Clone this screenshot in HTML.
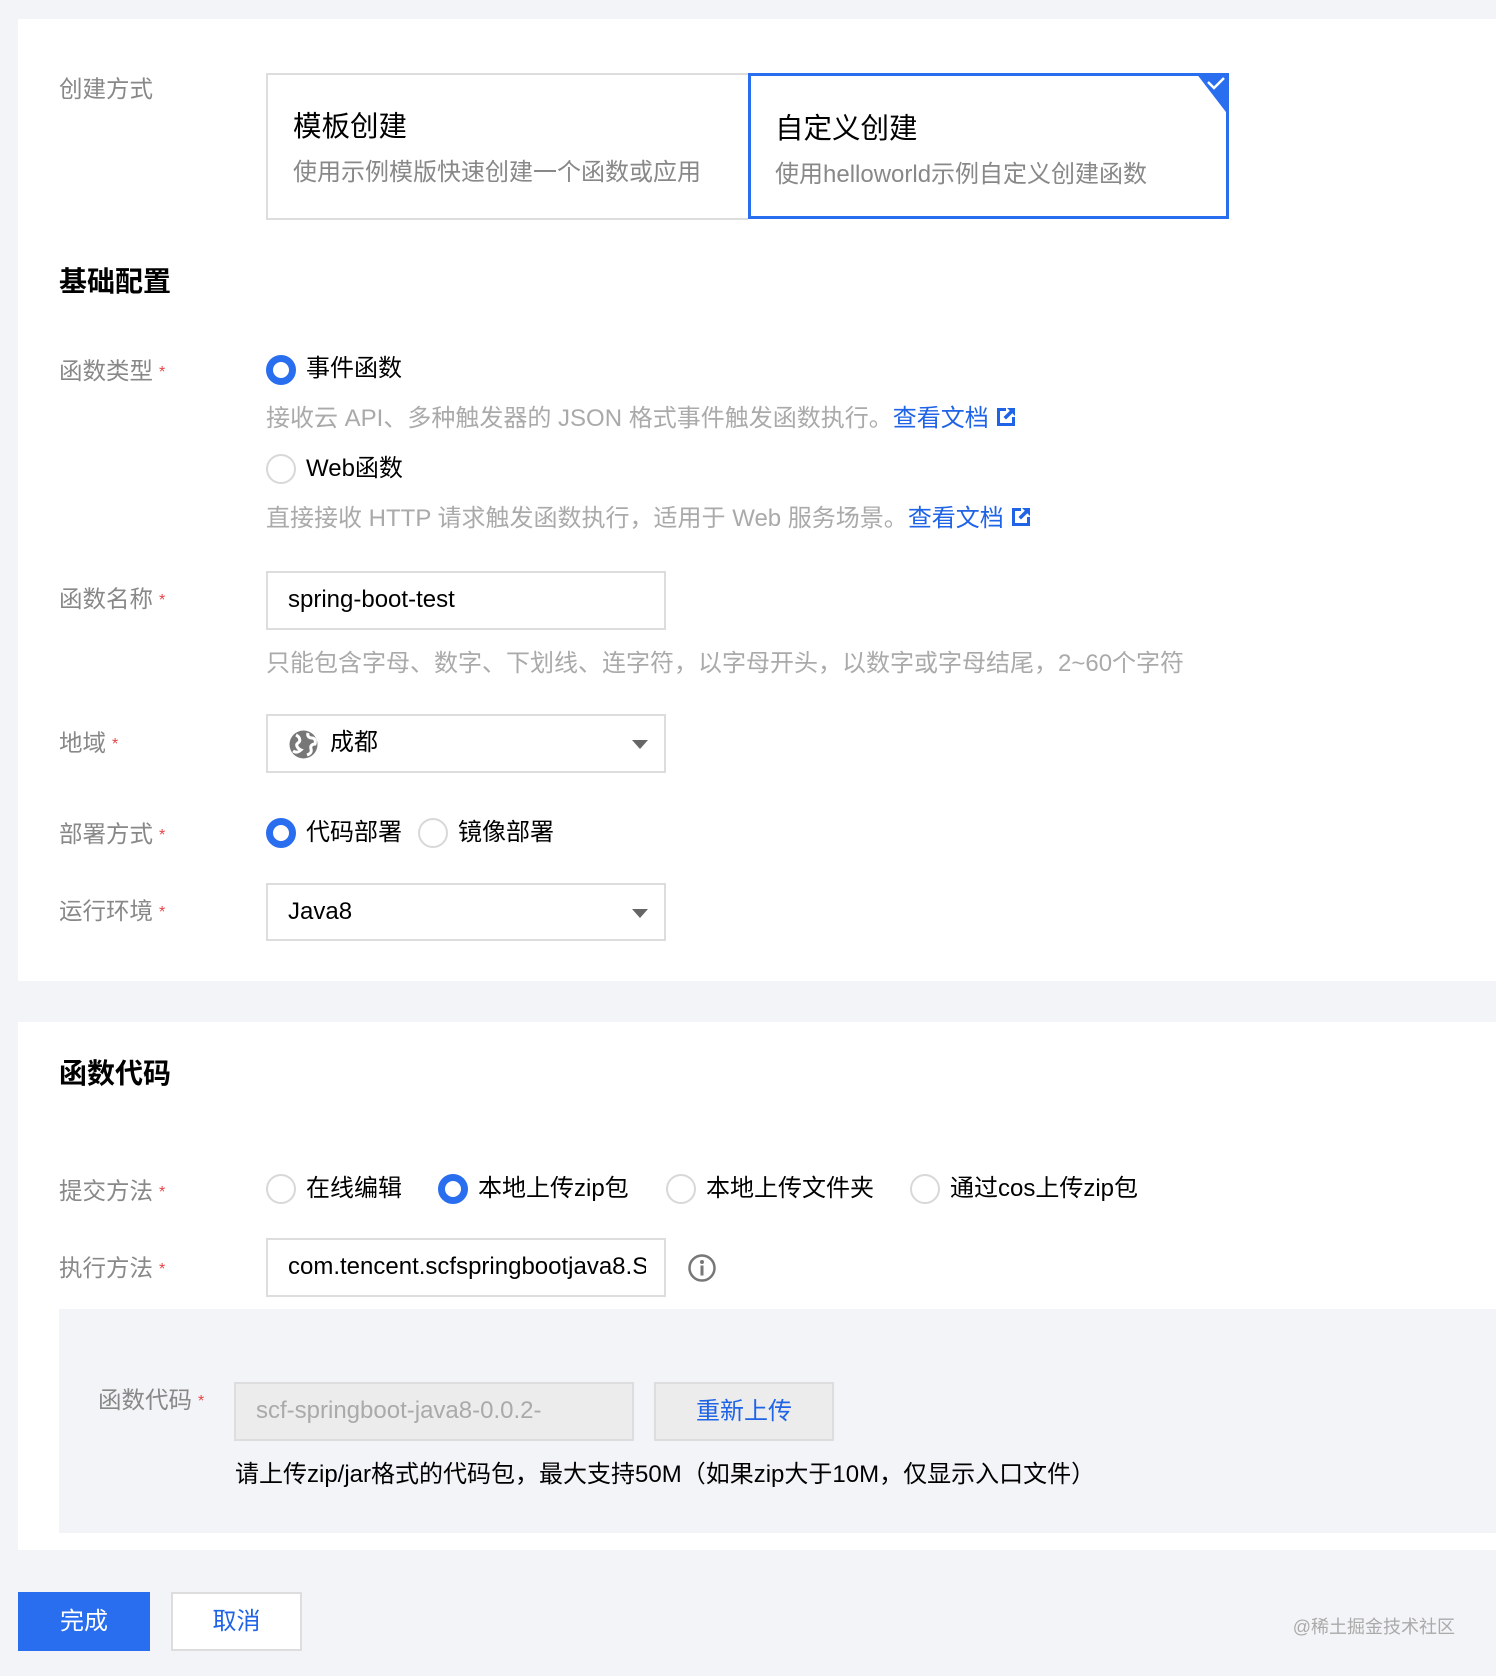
<!DOCTYPE html>
<html><head><meta charset="utf-8"><style>
*{margin:0;padding:0;box-sizing:border-box}
body{width:1496px;height:1676px;background:#f3f4f7;position:relative;overflow:hidden;font-family:"Liberation Sans","Noto Sans CJK SC",sans-serif;color:#000}
.a{position:absolute;white-space:nowrap}
.panel{position:absolute;background:#fff;left:18px;right:0}
.lbl{position:absolute;left:59px;font-size:23.5px;color:#888;line-height:30px}
.lbl i{color:#e54545;font-style:normal;font-size:16px;margin-left:6px;vertical-align:2px}
.t{font-size:24px;line-height:30px}
.desc{font-size:24px;color:#aaa;line-height:30px}
.blue{color:#1f63e6}
.radio{position:absolute;width:30px;height:30px;border-radius:50%;border:2px solid #d8d8d8;background:#fff}
.radio.on{border:7px solid #2a6ef0}
.inp{position:absolute;border:2px solid #ddd;background:#fff;font-size:24px;line-height:54px;padding-left:20px;overflow:hidden}
.h{font-size:28px;font-weight:bold;line-height:36px}
.arrow{position:absolute;right:16px;top:24px;width:0;height:0;border-left:8px solid transparent;border-right:8px solid transparent;border-top:9px solid #666}
</style></head><body>
<div class="panel" style="top:19px;height:962px"></div>
<div class="panel" style="top:1022px;height:528px"></div>

<div class="lbl" style="top:74px">创建方式</div>
<div class="a" style="left:266px;top:73px;width:482px;height:147px;border:2px solid #ddd;border-right:none"></div>
<div class="a" style="left:748px;top:73px;width:481px;height:146px;border:3px solid #2a6ef0"></div>
<svg class="a" style="left:1196px;top:73px" width="33" height="43"><polygon points="0,0 33,0 33,43" fill="#2a6ef0"/><path d="M12 9 L18 15 L28 5" stroke="#fff" stroke-width="2.5" fill="none"/></svg>
<div class="a" style="left:293px;top:109px;font-size:28.5px;line-height:36px">模板创建</div>
<div class="a desc" style="left:293px;top:158px;color:#888">使用示例模版快速创建一个函数或应用</div>
<div class="a" style="left:775px;top:111px;font-size:28.5px;line-height:36px">自定义创建</div>
<div class="a desc" style="left:775px;top:160px;color:#888">使用helloworld示例自定义创建函数</div>

<div class="a h" style="left:59px;top:264px">基础配置</div>

<div class="lbl" style="top:356px">函数类型<i>*</i></div>
<div class="radio on" style="left:266px;top:355px"></div>
<div class="a t" style="left:306px;top:354px">事件函数</div>
<div class="a desc" style="left:266px;top:404px">接收云 API、多种触发器的 JSON 格式事件触发函数执行。<span class="blue">查看文档</span> <svg width="22" height="22" style="vertical-align:-2px"><path d="M2 2h9v3H5v12h12v-6h3v9H2z" fill="#1f63e6"/><path d="M12 2h8v8l-2.7-2.7L11 13.5 8.5 11l6.3-6.3z" fill="#1f63e6"/></svg></div>
<div class="radio" style="left:266px;top:454px"></div>
<div class="a t" style="left:306px;top:454px">Web函数</div>
<div class="a desc" style="left:266px;top:504px">直接接收 HTTP 请求触发函数执行，适用于 Web 服务场景。<span class="blue">查看文档</span> <svg width="22" height="22" style="vertical-align:-2px"><path d="M2 2h9v3H5v12h12v-6h3v9H2z" fill="#1f63e6"/><path d="M12 2h8v8l-2.7-2.7L11 13.5 8.5 11l6.3-6.3z" fill="#1f63e6"/></svg></div>

<div class="lbl" style="top:584px">函数名称<i>*</i></div>
<div class="inp" style="left:266px;top:571px;width:400px;height:59px">spring-boot-test</div>
<div class="a desc" style="left:266px;top:649px">只能包含字母、数字、下划线、连字符，以字母开头，以数字或字母结尾，2~60个字符</div>

<div class="lbl" style="top:728px">地域<i>*</i></div>
<div class="inp" style="left:266px;top:714px;width:400px;height:59px;padding-left:62px">成都<div class="arrow"></div>
<svg class="a" style="left:20px;top:13px" width="31" height="31"><circle cx="15.5" cy="15.5" r="14" fill="#777"/><path d="M8 6c4 2 5 6 2 8s0 6 3 7c-2 2-5 3-8 1M20 4c-1 3 1 5 4 5s4 3 3 6c-3 0-5 2-4 5s-1 5-4 6" fill="none" stroke="#fff" stroke-width="3"/></svg></div>

<div class="lbl" style="top:819px">部署方式<i>*</i></div>
<div class="radio on" style="left:266px;top:818px"></div>
<div class="a t" style="left:306px;top:818px">代码部署</div>
<div class="radio" style="left:418px;top:818px"></div>
<div class="a t" style="left:458px;top:818px">镜像部署</div>

<div class="lbl" style="top:896px">运行环境<i>*</i></div>
<div class="inp" style="left:266px;top:883px;width:400px;height:58px">Java8<div class="arrow"></div></div>

<div class="a h" style="left:59px;top:1056px">函数代码</div>

<div class="lbl" style="top:1176px">提交方法<i>*</i></div>
<div class="radio" style="left:266px;top:1174px"></div>
<div class="a t" style="left:306px;top:1174px">在线编辑</div>
<div class="radio on" style="left:438px;top:1174px"></div>
<div class="a t" style="left:478px;top:1174px">本地上传zip包</div>
<div class="radio" style="left:666px;top:1174px"></div>
<div class="a t" style="left:706px;top:1174px">本地上传文件夹</div>
<div class="radio" style="left:910px;top:1174px"></div>
<div class="a t" style="left:950px;top:1174px">通过cos上传zip包</div>

<div class="lbl" style="top:1253px">执行方法<i>*</i></div>
<div class="inp" style="left:266px;top:1238px;width:400px;height:59px;border-right:20px solid #fff;box-shadow:0 0 0 0 #ddd;outline:2px solid #ddd;outline-offset:-2px">com.tencent.scfspringbootjava8.ScfHandler::mainHandler</div>
<svg class="a" style="left:687px;top:1253px" width="30" height="30"><circle cx="15" cy="15" r="12.5" fill="none" stroke="#777" stroke-width="2.5"/><circle cx="15" cy="9" r="2" fill="#777"/><rect x="13.5" y="12.5" width="3" height="10" fill="#777"/></svg>

<div class="a" style="left:59px;top:1309px;right:0;height:224px;background:#f3f4f7"></div>
<div class="lbl" style="left:98px;top:1385px">函数代码<i>*</i></div>
<div class="inp" style="left:234px;top:1382px;width:400px;height:59px;background:#ececec;color:#aaa;border-color:#ddd;border-right:64px solid #ececec;outline:2px solid #ddd;outline-offset:-2px">scf-springboot-java8-0.0.2-SNAPSHOT.jar</div>
<div class="a t blue" style="left:654px;top:1382px;width:180px;height:59px;border:2px solid #ddd;background:#ececec;line-height:55px;text-align:center">重新上传</div>
<div class="a t" style="left:235px;top:1460px">请上传zip/jar格式的代码包，最大支持50M（如果zip大于10M，仅显示入口文件）</div>

<div class="a" style="left:18px;top:1592px;width:132px;height:59px;background:#2a6ef0;color:#fff;font-size:24px;line-height:59px;text-align:center">完成</div>
<div class="a blue" style="left:171px;top:1592px;width:131px;height:59px;border:2px solid #ddd;background:#fff;font-size:24px;line-height:55px;text-align:center">取消</div>
<div class="a" style="right:41px;top:1613px;font-size:18px;color:#aaa">@稀土掘金技术社区</div>
</body></html>
